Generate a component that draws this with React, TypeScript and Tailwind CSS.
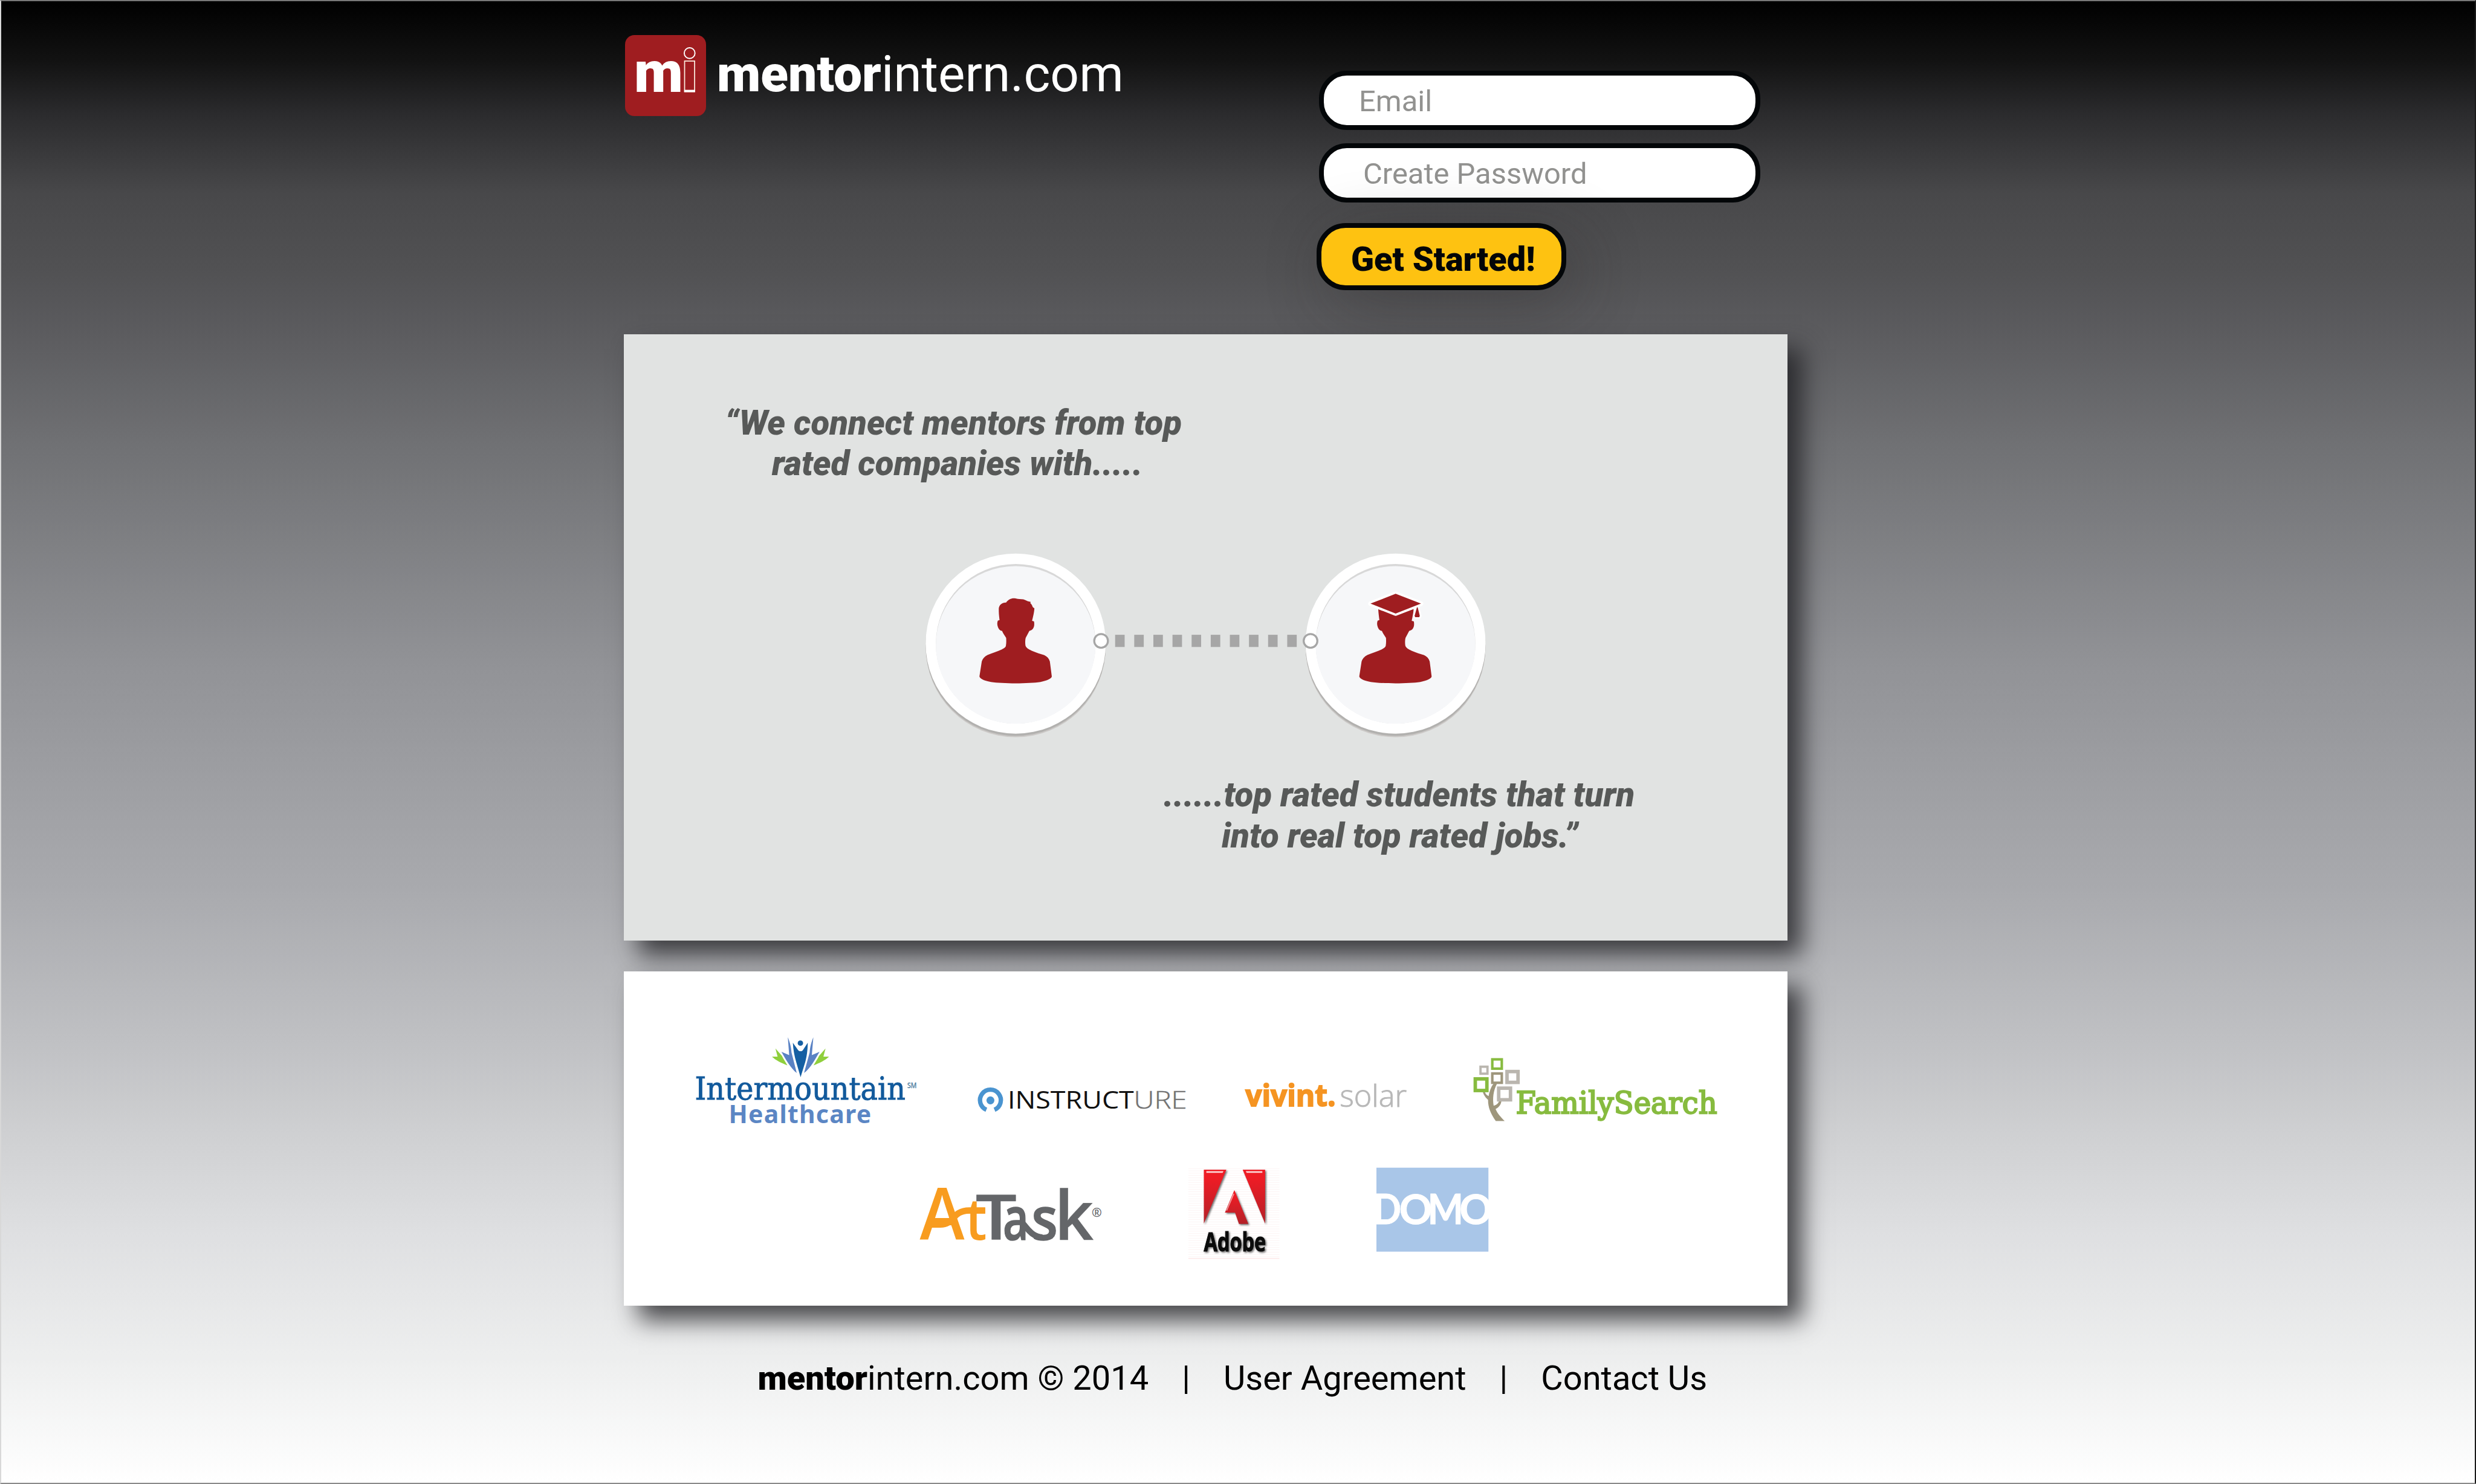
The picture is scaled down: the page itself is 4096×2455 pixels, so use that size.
import React from 'react';

type InkTextProps = {
  text: string;
  from: number;
  to: number;
  y: number;
  size: number;
  inkLeft: number;
  inkRight: number;
  className: string;
  strokeWidth?: number;
  letterSpacing?: number;
};

// Sets a word between two x positions; inkLeft and inkRight are the font's ink bounds at 100px.
function InkText({ text, from, to, y, size, inkLeft, inkRight, className, strokeWidth, letterSpacing }: InkTextProps) {
  const k = size / 100;
  const sx = (to - from) / ((inkRight - inkLeft) * k);
  return (
    <text
      transform={`translate(${from - inkLeft * k * sx} ${y}) scale(${sx} 1)`}
      fontSize={size}
      className={className}
      strokeWidth={strokeWidth}
      letterSpacing={letterSpacing}
    >
      {text}
    </text>
  );
}

const SERIF = "font-['DejaVu_Serif',serif]";
const SHOULDERS =
  'C636 515 630 527 624 538 C621 550 621 565 623 578 C627 590 640 598 655 604 C680 615 700 620 720 627 C735 634 745 645 749 660 L759 737 C759 748 735 758 700 766 C640 775 505 775 445 766 C405 758 387 748 385 737 L397 660 C400 648 410 635 427 626 C450 617 480 608 500 598 C515 590 521 586 522 577 C524 565 524 550 523 538 C515 525 507 515 502 502 C492 500 486 495 481 483 C476 470 476 460 480 449 L489 446';

function Mentor() {
  return (
    <path
      className="fill-[#9f1d20]"
      d={`M523 355 C535 338 552 331 572 334 C588 338 597 336 612 339 C624 342 632 349 640 350 L650 352 L648 358 C655 364 658 370 660 378 C664 383 667 382 669 386 C668 405 663 425 657 450 L667 453 C670 470 668 483 660 493 C654 500 648 500 643 502 ${SHOULDERS} C487 430 485 415 485 390 C484 370 500 355 523 355Z`}
    />
  );
}

function Student() {
  return (
    <g className="fill-[#9f1d20]">
      <path
        d={`M483 388 L572 420 L666 388 C665 410 660 430 656 450 L667 453 C670 470 668 483 660 493 C654 500 648 500 643 502 ${SHOULDERS} C487 430 484 410 483 388Z`}
      />
      <path
        className="fill-[#9f1d20] stroke-white"
        strokeWidth="20"
        strokeLinejoin="round"
        d="M683 382 L686 382 L697 424 L694 430 L676 430 L673 424Z"
      />
      <path
        className="stroke-white"
        strokeWidth="24"
        strokeLinejoin="round"
        d="M573 310 L704 361 L573 412 L443 361Z"
      />
      <path d="M573 310 L704 361 L573 412 L443 361Z" />
      <path d="M683 380 L687 380 L698 424 L695 431 L674 431 L671 424Z" />
    </g>
  );
}

function Medallion({ cx, children }: { cx: number; children: React.ReactNode }) {
  return (
    <g>
      <circle cx={cx} cy="1115.5" r="155" className="fill-[#cbc8c6]" />
      <circle cx={cx} cy="1113" r="155.2" className="fill-[#b2b1af]" />
      <circle cx={cx} cy="1109.2" r="155.2" className="fill-white" />
      <circle cx={cx} cy="1109.5" r="137.6" className="fill-[#d8d8d8]" />
      <ellipse cx={cx} cy="1111.5" rx="137.6" ry="135.8" className="fill-[#f6f7f9]" />
      <g transform={`translate(${cx - 190.83} 920) scale(0.33333)`}>{children}</g>
    </g>
  );
}

function ConnectionGraphic() {
  const dashes = [0, 1, 2, 3, 4, 5, 6, 7, 8, 9];
  return (
    <svg viewBox="1590 945 976 330" className="ml-[494px] mt-[106px] block h-[317px] w-[937px]">
      <Medallion cx={1750.7}>
        <Mentor />
      </Medallion>
      <Medallion cx={2405.2}>
        <Student />
      </Medallion>
      {dashes.map((i) => (
        <rect key={i} x={1922 + i * 32.95} y="1094" width="16.4" height="21" className="fill-[#a6a6a6]" />
      ))}
      <circle cx="1897.8" cy="1104.5" r="11.8" className="fill-white stroke-[#a6a6a6]" strokeWidth="3.4" />
      <circle cx="2258.7" cy="1104.5" r="11.8" className="fill-white stroke-[#a6a6a6]" strokeWidth="3.4" />
    </svg>
  );
}

function BrandMark() {
  return (
    <svg viewBox="1077 61 139 139" className="block h-[134px] w-[134px]">
      <rect x="1077" y="61" width="139" height="139" rx="16" className="fill-[#9f1d20]" />
      <InkText text="m" from={1096.4} to={1172.4} y={158.8} size={98.5} inkLeft={4} inkRight={82} className="fill-white font-['Roboto',sans-serif] font-black" />
      <rect x="1179.2" y="105.6" width="17.2" height="52.5" className="fill-none stroke-[#fdeee0]" strokeWidth="1.8" />
      <rect x="1178.5" y="155" width="18.6" height="3.9" className="fill-white" />
      <circle cx="1187.8" cy="92" r="9.2" className="fill-none stroke-white" strokeWidth="2" />
    </svg>
  );
}

function Intermountain() {
  return (
    <svg viewBox="90 60 1200 495" className="block h-[158.4px] w-[384px]">
      <path className="fill-[#155fa3]" d="M620 110 L645 145 C652 157 668 157 674 145 L697 110 C697 150 690 190 684 210 L660 288 L638 212 C628 180 622 145 620 110Z" />
      <circle cx="659" cy="112" r="14" className="fill-[#155fa3]" />
      <path className="fill-[#5a82c4]" d="M594 82 C604 105 612 135 613 160 L640 266 C610 245 580 190 561 157 L601 174Z" />
      <path className="fill-[#5a82c4]" d="M726 82 C716 105 708 135 707 160 L678 266 C710 245 738 190 758 157 L718 174Z" />
      <path className="fill-[#8fcf3c]" d="M530 140 L563 177 C572 195 582 210 592 227 C560 215 530 200 512 182 L541 182Z" />
      <path className="fill-[#8fcf3c]" d="M789 140 L756 177 C747 195 737 210 727 227 C759 215 789 200 807 182 L778 182Z" />
      <InkText text="Intermountain" from={121} to={1199} y={404.5} size={162} inkLeft={5} inkRight={728.7} className={`${SERIF} fill-[#125a9c] stroke-[#125a9c]`} strokeWidth={3} />
      <InkText text="Healthcare" from={300} to={1020} y={527} size={126} inkLeft={9} inkRight={573} letterSpacing={4} className="fill-[#5b86c4] font-['Noto_Sans',sans-serif] font-bold" />
      <text x="1212" y="345" fontSize="37" textLength="48" lengthAdjust="spacingAndGlyphs" className="fill-[#4b7c9e] stroke-[#4b7c9e] font-['Noto_Sans',sans-serif]">SM</text>
    </svg>
  );
}

function Instructure() {
  return (
    <svg viewBox="1680 1780 370 165" className="ml-[86.4px] block h-[158.4px] w-[355.2px]">
      <path d="M1699.5 1912.2 A18 18 0 1 1 1713.5 1912.2" className="fill-none stroke-[#4a94d0]" strokeWidth="7.6" />
      <circle cx="1706.5" cy="1896" r="6.8" className="fill-[#4a94d0]" />
      <InkText text="INSTRUCT" from={1740.4} to={1953.8} y={1910.3} size={41.5} inkLeft={9} inkRight={465.7} className="fill-[#111111] font-['Open_Sans',sans-serif]" />
      <InkText text="URE" from={1958} to={2042.7} y={1910.3} size={41.5} inkLeft={9} inkRight={181.3} strokeWidth={0.5} className="fill-[#737373] stroke-[#737373] font-['Open_Sans',sans-serif] font-light" />
    </svg>
  );
}

function VivintSolar() {
  return (
    <svg viewBox="2140 1780 290 165" className="ml-[86.4px] block h-[158.4px] w-[278.4px]">
      <InkText text="vivint." from={2146.6} to={2299.4} y={1906.4} size={51.5} inkLeft={0} inkRight={306.9} strokeWidth={2} className="fill-[#f59422] stroke-[#f59422] font-['Open_Sans',sans-serif] font-bold" />
      <InkText text="solar" from={2311} to={2424} y={1907} size={52} inkLeft={4} inkRight={218.8} strokeWidth={0.9} className="fill-[#b8b8b8] stroke-[#b8b8b8] font-['Open_Sans',sans-serif] font-light" />
    </svg>
  );
}

function FamilySearch() {
  return (
    <svg viewBox="90 -30 1305 495" className="ml-[96px] block h-[158.4px] w-[417.6px]">
      <path className="fill-[#9e967c]" d="M221 230 L239 230 C218 270 215 310 221 346 C240 340 247 330 249 320 L261 324 C257 345 245 355 231 363 C240 385 258 405 278 425 L232 425 C205 385 192 355 192 315 C182 308 170 292 165 275 L176 275 C180 288 188 293 195 296 C198 275 206 250 221 230Z" />
      <g className="fill-none">
        <rect x="214" y="106" width="49" height="48" strokeWidth="13" className="stroke-[#87bb3f]" />
        <rect x="126" y="207" width="60" height="60" strokeWidth="18" className="stroke-[#87bb3f]" />
        <rect x="153" y="144" width="36" height="36" strokeWidth="12" className="stroke-[#bab6af]" />
        <rect x="290" y="169" width="57" height="56" strokeWidth="18" className="stroke-[#bab6af]" />
        <rect x="247" y="255" width="61" height="60" strokeWidth="18" className="stroke-[#bab6af]" />
        <rect x="214" y="179" width="49" height="48" strokeWidth="13" className="stroke-[#9e967c]" />
      </g>
      <InkText text="FamilySearch" from={343} to={1373} y={386} size={160} inkLeft={5} inkRight={690.6} className={`${SERIF} fill-[#87bb3f] stroke-[#87bb3f]`} strokeWidth={7.5} />
    </svg>
  );
}

function AtTask() {
  const sans = "font-['Open_Sans',sans-serif] font-semibold";
  return (
    <svg viewBox="1580 2005 325 170" className="block h-[163.2px] w-[312px]">
      <g className={`fill-[#f89c1f] ${sans}`}>
        <InkText text="A" from={1584.8} to={1663} y={2136.7} size={125} inkLeft={0} inkRight={67} className="" />
        <InkText text="t" from={1664} to={1698} y={2136.7} size={100} inkLeft={1} inkRight={37} className="" />
        <path d="M1604 2110 L1620 2110 C1645 2110 1640 2086 1670 2085.7 L1697.6 2085.7" className="fill-none stroke-[#f89c1f]" strokeWidth="11" />
      </g>
      <g className={`fill-[#646669] stroke-[#646669] ${sans}`}>
        <InkText text="T" from={1682} to={1750} y={2136.7} size={108} inkLeft={1} inkRight={55} strokeWidth={0.5} className="" />
        <InkText text="a" from={1731} to={1767} y={2136} size={102} inkLeft={4} inkRight={51} strokeWidth={1.6} className="" />
        <InkText text="s" from={1781} to={1819} y={2136} size={102} inkLeft={4} inkRight={45} strokeWidth={1.6} className="" />
        <InkText text="k" from={1826.5} to={1884} y={2136.7} size={117.6} inkLeft={8} inkRight={57} strokeWidth={0.5} className="" />
        <path d="M1757 2104 C1768 2110 1774 2131 1796 2132" className="fill-none" strokeWidth="10.5" />
        <text x="1881" y="2097" fontSize="21" className="stroke-none">®</text>
      </g>
    </svg>
  );
}

function Adobe() {
  const lines = Array.from({ length: 39 }, (_, i) => 2013 + i * 4);
  return (
    <svg viewBox="2045 2005 162 170" className="ml-[134.4px] block h-[163.2px] w-[155.5px]">
      <defs>
        <linearGradient id="adobeRed" x1="0" y1="0" x2="0" y2="1">
          <stop offset="0.15" stopColor="#ee1c25" />
          <stop offset="1" stopColor="#b32128" />
        </linearGradient>
      </defs>
      {lines.map((y) => (
        <rect key={y} x="2048" y={y} width="157" height="1" className="fill-[#fdf4f4]" />
      ))}
      <rect x="2048" y="2168" width="157" height="1" className="fill-[#fbdcdc]" />
      <g className="drop-shadow-[2px_2.5px_1.5px_rgba(0,0,0,0.55)]">
        <path fill="url(#adobeRed)" d="M2074.7 2015.5 H2113.5 L2074.7 2108.3Z" />
        <path fill="url(#adobeRed)" d="M2141.6 2015.5 H2180.3 V2108.3Z" />
        <path fill="url(#adobeRed)" d="M2127.3 2050.7 L2151.4 2109 H2135.2 L2128.4 2089.5 H2111Z" />
        <path className="fill-white/80" d="M2079 2018 H2108.5 L2107 2021 H2079Z M2147 2018 H2175.5 V2021 H2148.5Z" />
        <path className="fill-none stroke-white/60" strokeWidth="1.6" d="M2126.3 2057 L2114 2086" />
        <InkText text="Adobe" from={2074.7} to={2180.3} y={2155.7} size={44.5} inkLeft={0} inkRight={312.5} className="fill-[#0b0b0b] stroke-[#0b0b0b] font-['Open_Sans',sans-serif] font-bold" strokeWidth={1.2} />
      </g>
    </svg>
  );
}

function Domo() {
  const lato = "fill-white stroke-white font-['Lato',sans-serif] font-bold";
  return (
    <svg viewBox="2372 2005 193 170" className="ml-[158.5px] block h-[163.2px] w-[185.3px]">
      <rect x="2372" y="2012" width="193" height="144.7" className="fill-[#a9c6e8]" />
      <InkText text="D" from={2371} to={2413} y={2109.4} size={71} inkLeft={8} inkRight={73} strokeWidth={1} className={lato} />
      <InkText text="O" from={2413.5} to={2465.5} y={2109} size={70} inkLeft={3} inkRight={77} strokeWidth={1} className={lato} />
      <InkText text="M" from={2465.5} to={2517} y={2109.4} size={71} inkLeft={8} inkRight={87} strokeWidth={1} className={lato} />
      <InkText text="O" from={2517} to={2569} y={2109} size={70} inkLeft={3} inkRight={77} strokeWidth={1} className={lato} />
    </svg>
  );
}

function Field({ children, className }: { children: React.ReactNode; className: string }) {
  return (
    <div className={`flex h-[98px] w-[730px] items-center rounded-[46px] border-8 border-[#030608] bg-white text-[48.9px] leading-none text-[#929290] ${className}`}>
      {children}
    </div>
  );
}

export default function App() {
  return (
    <div className="h-[2455px] w-[4096px] overflow-hidden border-2 border-t-[#777777] border-r-[#1a1a1a] border-b-[#8a8a8a] border-l-[#d8d8d8] bg-[linear-gradient(to_bottom,#000_0%,#121212_4%,#2b2b2d_7.6%,#48484a_13%,#515153_18%,#5c5c5f_22.5%,#707174_30%,#929397_45%,#a9aaae_60%,#bfc0c3_70%,#cfd0d2_76.5%,#dedfe1_83%,#eeefef_92%,#ffffff_100%)] pl-[1030px] font-['Roboto',sans-serif]">
      <div className="flex w-[1925px] flex-col">
        <header className="flex h-[551px] items-start">
          <div className="ml-0.5 mt-[56px] flex w-[1144px] items-center gap-[18px]">
            <BrandMark />
            <h1 className="pb-[4px] text-[83.9px] leading-none text-white">
              <span className="font-black">mentor</span>intern.com
            </h1>
          </div>
          <form className="mt-[115px] flex flex-col items-start">
            <Field className="ml-[4px] pl-[58px] pt-[4px]">Email</Field>
            <Field className="ml-[4px] mt-[22px] pl-[65px] pt-[4px]">Create Password</Field>
            <button
              type="button"
              className="mt-[34px] flex h-[111px] w-[413px] items-center rounded-[48px] border-8 border-[#030608] bg-[#fec211] pl-[49px] pt-[10px] text-[55.9px] leading-none font-black text-[#030608] shadow-[20px_24px_110px_rgba(35,31,32,0.32)]"
            >
              Get Started!
            </button>
          </form>
        </header>

        <section className="h-[1003px] bg-[#e1e3e2] pt-[114px] shadow-[24px_24px_38px_rgba(30,30,34,0.8)]">
          <div className="flex flex-col pl-[167px] text-[56.4px] leading-[67.2px] font-black text-[#575958] italic">
            <span>“We connect mentors from top</span>
            <span className="pl-[78px]">rated companies with.....</span>
          </div>
          <ConnectionGraphic />
          <div className="mt-[58px] flex flex-col pl-[893px] text-[56.5px] leading-[67.2px] font-black text-[#575958] italic">
            <span>......top rated students that turn</span>
            <span className="pl-[96px]">into real top rated jobs.”</span>
          </div>
        </section>

        <section className="mt-[51px] h-[553px] bg-white pt-[102px] shadow-[24px_24px_38px_rgba(30,30,34,0.8)]">
          <div className="flex pl-[110.4px]">
            <Intermountain />
            <Instructure />
            <VivintSolar />
            <FamilySearch />
          </div>
          <div className="mt-[57.6px] flex pl-[485px]">
            <AtTask />
            <Adobe />
            <Domo />
          </div>
        </section>

        <footer className="mt-[84.5px] flex gap-[55px] pl-[221.5px] text-[56px] leading-[70px] text-black">
          <span>
            <span className="font-black">mentor</span>intern.com © 2014
          </span>
          <span>|</span>
          <span>User Agreement</span>
          <span>|</span>
          <span>Contact Us</span>
        </footer>
      </div>
    </div>
  );
}
